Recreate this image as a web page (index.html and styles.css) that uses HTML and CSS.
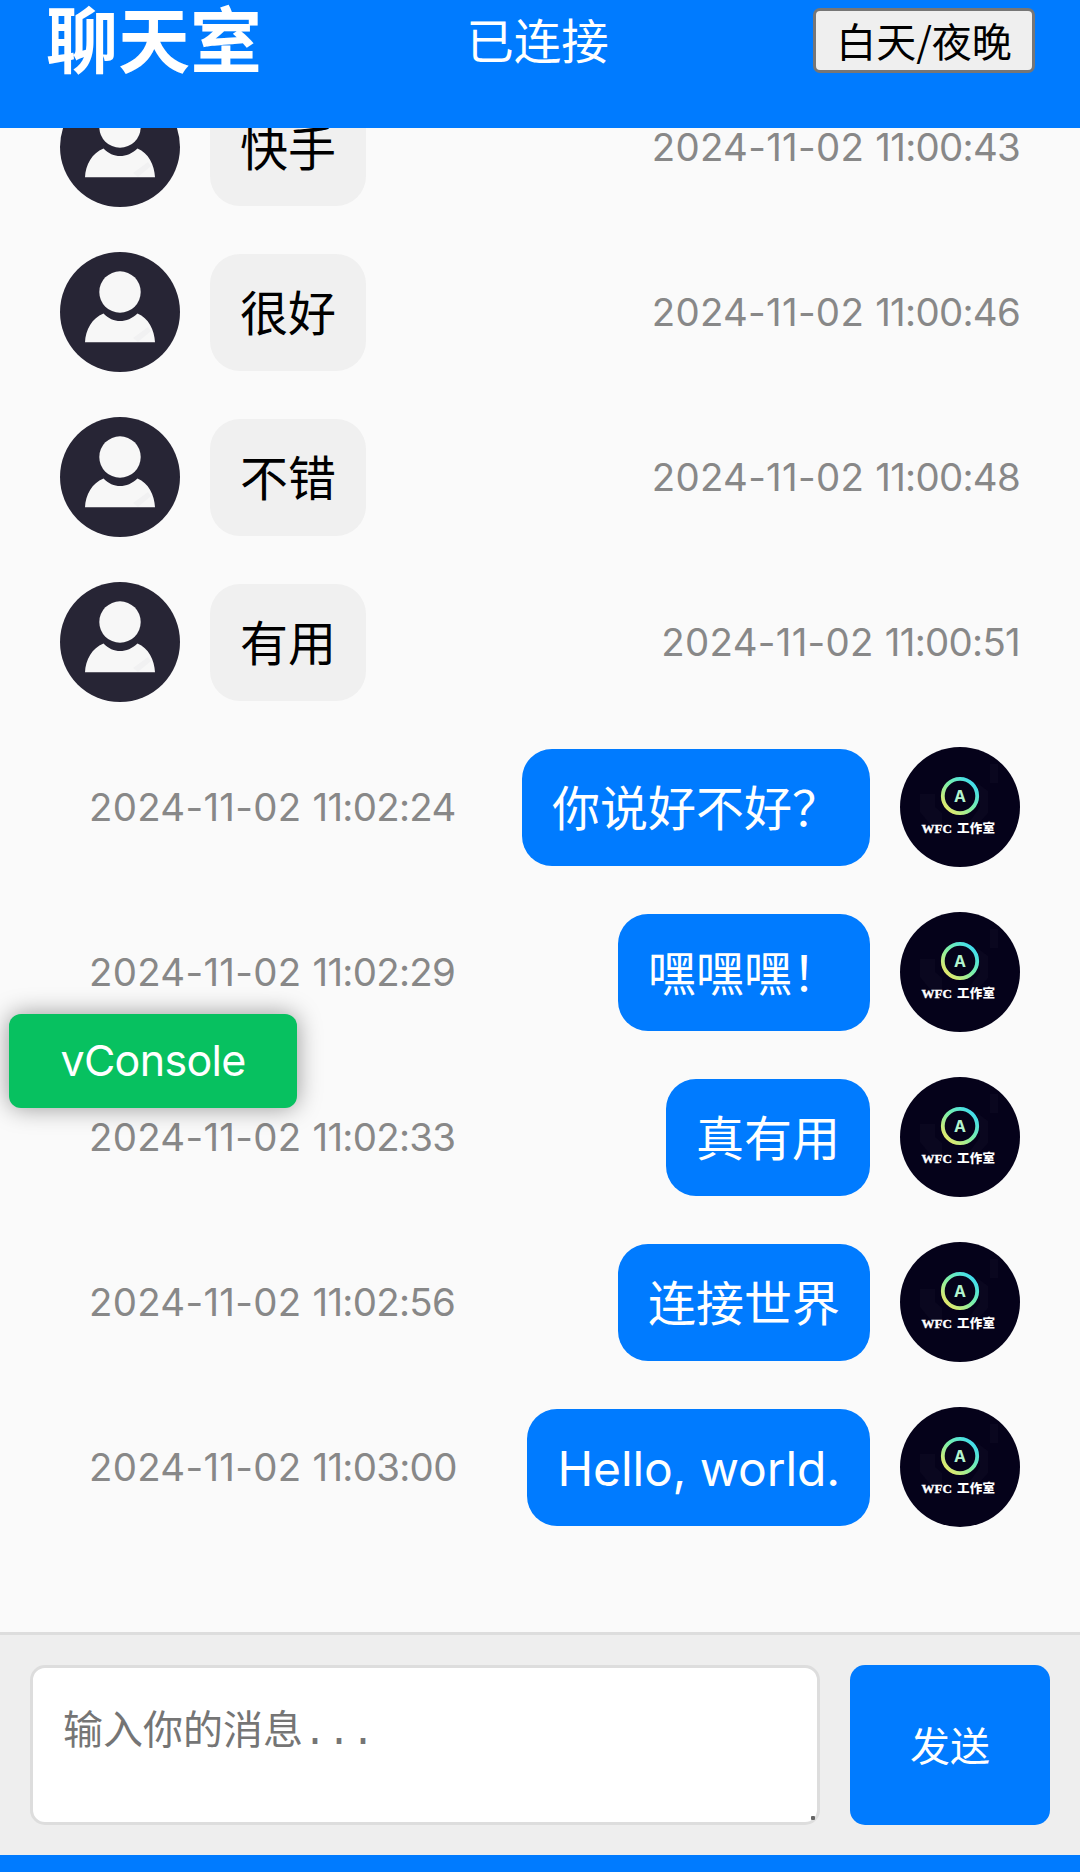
FILE: index.html
```html
<!DOCTYPE html>
<html lang="zh-CN">
<head>
<meta charset="utf-8">
<title>聊天室</title>
<link rel="stylesheet" href="styles.css">
</head>
<body>
<svg class="defs" width="0" height="0" aria-hidden="true">
  <defs>
    <linearGradient id="ring" x1="0" y1="1" x2="1" y2="0">
      <stop offset="0.1" stop-color="#e6e86a"/>
      <stop offset="0.5" stop-color="#7df0a8"/>
      <stop offset="0.9" stop-color="#3fdcf0"/>
    </linearGradient>
  </defs>
  <symbol id="guest" viewBox="0 0 120 120">
    <circle cx="60" cy="60" r="60" fill="#272535"/>
    <circle cx="60" cy="40" r="20.7" fill="#f7f7f7"/>
    <path d="M25 90.300C25.500 78 32 66 43.500 61.500C53 71.500 67 71.500 77.500 61.500C88.500 66 94.500 78 95 90.300Z" fill="#f7f7f7"/>
    <path d="M73 86L88 75L91 79L78 90Z" fill="#f1f1f2"/>
  </symbol>
  <symbol id="studio" viewBox="0 0 120 120">
    <circle cx="60" cy="60" r="60" fill="#05021a"/>
    <path d="M20 47H35V60L42 66V77H30L20 65ZM77 36L88 44V66L78 77H68L80 60ZM90 17H98V36H90Z" fill="#0a071f"/>
    <circle cx="60" cy="49" r="17.200" fill="none" stroke="url(#ring)" stroke-width="3.800"/>
  </symbol>
</svg>

<div class="app">
  <header class="header">
    <h1 class="title">聊天室</h1>
    <span class="status">已连接</span>
    <button class="theme">白天/夜晚</button>
  </header>

  <main class="messages">
    <div class="row"><svg class="avatar"><use href="#guest"/></svg><div class="bubble">快手</div><time class="time"><span class="date">2024-11-02 </span><span class="clock">11:00:43</span></time></div>
    <div class="row"><svg class="avatar"><use href="#guest"/></svg><div class="bubble">很好</div><time class="time"><span class="date">2024-11-02 </span><span class="clock">11:00:46</span></time></div>
    <div class="row"><svg class="avatar"><use href="#guest"/></svg><div class="bubble">不错</div><time class="time"><span class="date">2024-11-02 </span><span class="clock">11:00:48</span></time></div>
    <div class="row"><svg class="avatar"><use href="#guest"/></svg><div class="bubble">有用</div><time class="time"><span class="date">2024-11-02 </span><span class="clock">11:00:51</span></time></div>
    <div class="row sent">
      <svg class="avatar"><use href="#studio"/><text class="logo-letter" x="60" y="55" text-anchor="middle">A</text><text class="logo-name" x="21.500" y="85.500" textLength="30.500">WFC</text><text class="logo-name logo-name-cn" x="57" y="86" textLength="38">工作室</text></svg>
      <div class="bubble">你说好不好？</div><time class="time"><span class="date">2024-11-02 </span><span class="clock">11:02:24</span></time>
    </div>
    <div class="row sent">
      <svg class="avatar"><use href="#studio"/><text class="logo-letter" x="60" y="55" text-anchor="middle">A</text><text class="logo-name" x="21.500" y="85.500" textLength="30.500">WFC</text><text class="logo-name logo-name-cn" x="57" y="86" textLength="38">工作室</text></svg>
      <div class="bubble">嘿嘿嘿！</div><time class="time"><span class="date">2024-11-02 </span><span class="clock">11:02:29</span></time>
    </div>
    <div class="row sent">
      <svg class="avatar"><use href="#studio"/><text class="logo-letter" x="60" y="55" text-anchor="middle">A</text><text class="logo-name" x="21.500" y="85.500" textLength="30.500">WFC</text><text class="logo-name logo-name-cn" x="57" y="86" textLength="38">工作室</text></svg>
      <div class="bubble">真有用</div><time class="time"><span class="date">2024-11-02 </span><span class="clock">11:02:33</span></time>
    </div>
    <div class="row sent">
      <svg class="avatar"><use href="#studio"/><text class="logo-letter" x="60" y="55" text-anchor="middle">A</text><text class="logo-name" x="21.500" y="85.500" textLength="30.500">WFC</text><text class="logo-name logo-name-cn" x="57" y="86" textLength="38">工作室</text></svg>
      <div class="bubble">连接世界</div><time class="time"><span class="date">2024-11-02 </span><span class="clock">11:02:56</span></time>
    </div>
    <div class="row sent">
      <svg class="avatar"><use href="#studio"/><text class="logo-letter" x="60" y="55" text-anchor="middle">A</text><text class="logo-name" x="21.500" y="85.500" textLength="30.500">WFC</text><text class="logo-name logo-name-cn" x="57" y="86" textLength="38">工作室</text></svg>
      <div class="bubble latin">Hello, world.</div><time class="time"><span class="date">2024-11-02 </span><span class="clock">11:03:00</span></time>
    </div>
  </main>

  <footer class="composer">
    <div class="field">
      <textarea class="input" placeholder="输入你的消息..."></textarea>
      <span class="grip"></span>
    </div>
    <button class="send">发送</button>
  </footer>
  <div class="bottom"></div>
</div>
<div class="vconsole">vConsole</div>
</body>
</html>
```
FILE: styles.css
```css
* { box-sizing: border-box; }
body {
  margin: 0;
  font-family: Inter, "Noto Sans CJK SC", sans-serif;
  background: #fafafa;
}
.defs { position: absolute; }
.app {
  display: flex;
  flex-direction: column;
  height: 1872px;
  overflow: hidden;
}
.header {
  flex: none;
  display: flex;
  justify-content: space-between;
  align-items: center;
  height: 128px;
  padding: 0 45px 48px;
  background: #007bff;
  color: #fff;
}
.title {
  margin: 0;
  padding: 1px 0 0 1px;
  font-size: 72px;
  line-height: 80px;
  font-weight: 700;
}
.status { padding-top: 3px; font-size: 47.5px; line-height: 60px; }
.theme {
  width: 222px;
  height: 65px;
  padding: 0;
  border: 3px solid #767676;
  border-radius: 7px;
  background: #efefef;
  color: #000;
  font: 40px/56px "Noto Sans CJK SC", sans-serif;
}
.messages {
  flex: 1;
  min-height: 0;
  overflow: hidden;
  display: flex;
  flex-direction: column;
  justify-content: flex-end;
  gap: 45px;
  padding: 0 60px 105px;
}
.row {
  flex: none;
  display: flex;
  align-items: center;
  gap: 30px;
  height: 120px;
}
.sent { flex-direction: row-reverse; }
.avatar { flex: none; width: 120px; height: 120px; }
.bubble {
  height: 117px;
  padding: 31px 30px 29px;
  border-radius: 30px;
  background: #f0f0f0;
  color: #000;
  font-size: 48px;
  line-height: 57px;
  white-space: nowrap;
}
.sent .bubble { background: #007bff; color: #fff; }
.latin { letter-spacing: -0.1px; }
.time {
  margin-left: auto;
  color: #888;
  font-size: 38.4px;
  white-space: nowrap;
}
.date { letter-spacing: 0.3px; }
.clock { letter-spacing: -0.7px; }
.sent .time { margin: 0 auto 0 29px; }
.logo-letter { font: 700 16px Inter, sans-serif; fill: #b4f5cf; }
.logo-name {
  font: 700 13px "Liberation Serif", serif;
  fill: #fff;
  stroke: #fff;
  stroke-width: 0.4px;
}
.logo-name-cn { font: 900 12.5px "Noto Sans CJK SC", sans-serif; stroke: none; }
.composer {
  flex: none;
  display: flex;
  gap: 30px;
  height: 223px;
  padding: 30px;
  border-top: 3px solid #ddd;
  background: #eee;
}
.field { position: relative; flex: 1; display: flex; }
.input {
  flex: 1;
  height: 160px;
  padding: 36px 30px 30px;
  border: 3px solid #ddd;
  border-radius: 15px;
  background: #fff;
  resize: none;
  font: 40px/60px "Liberation Mono", "Noto Sans CJK SC", monospace;
}
.input::placeholder { color: #757575; }
.grip {
  position: absolute;
  right: 5px;
  bottom: 5px;
  width: 4px;
  height: 4px;
  border-radius: 1px;
  background: #666;
}
.send {
  width: 200px;
  height: 160px;
  padding: 0 0 2px;
  border: 0;
  border-radius: 15px;
  background: #007bff;
  color: #fff;
  font: 40px "Noto Sans CJK SC", sans-serif;
}
.bottom { flex: none; height: 17px; background: #007bff; }
.vconsole {
  position: absolute;
  left: 9px;
  top: 1014px;
  width: 288px;
  height: 94px;
  border-radius: 12px;
  background: #07c160;
  box-shadow: 0 0 24px rgba(0, 0, 0, .4);
  color: #fff;
  font-size: 43px;
  letter-spacing: -0.7px;
  line-height: 92px;
  text-align: center;
}
```
